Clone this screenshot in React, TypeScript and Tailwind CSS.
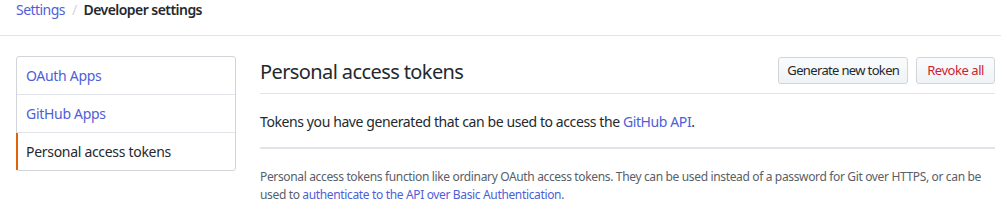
import React from 'react';

const App: React.FC = () => {
    return (
        <div className="w-[1001px] h-[204px] bg-white text-[#24292e] overflow-hidden font-['Noto_Sans',sans-serif]">
            <div className="h-[36px] border-b border-[#e1e4e8] pl-4 flex items-start">
                <div className="text-[14px] leading-[20px] tracking-[-0.55px]">
                    <a className="text-[#4f5ed8]">Settings</a>
                    <span className="text-[#d1d5da] mx-[7px]">/</span>
                    <span className="font-semibold">Developer settings</span>
                </div>
            </div>

            <div className="flex items-start pl-4 pr-[6px] pt-[20px] gap-6">
                <nav className="w-[220px] shrink-0 border border-[#d1d5da] rounded-[3px] text-[14px] tracking-[-0.3px]">
                    <a className="block h-[38px] leading-[37px] pl-[9px] border-b border-[#e1e4e8] text-[#4f5ed8]">OAuth Apps</a>
                    <a className="block h-[38px] leading-[37px] pl-[9px] border-b border-[#e1e4e8] text-[#4f5ed8]">GitHub Apps</a>
                    <a className="block h-[37px] leading-[37px] pl-[8px] border-l-2 border-[#e36209] -ml-px text-[#24292e]">Personal access tokens</a>
                </nav>

                <main className="flex-1">
                    <div className="flex items-start justify-between border-b border-[#e1e4e8] h-[38px]">
                        <h2 className="text-[20px] leading-[32px] font-normal tracking-[-0.6px]">Personal access tokens</h2>
                        <div className="flex gap-2 pt-px">
                            <button className="h-[27px] px-[8px] text-[13px] tracking-[-0.65px] rounded-[3px] border border-[#d1d5da] bg-gradient-to-b from-[#fafbfc] to-[#eff3f6] text-[#24292e]">Generate new token</button>
                            <button className="h-[27px] px-[10px] text-[13px] tracking-[-0.45px] rounded-[3px] border border-[#d1d5da] bg-gradient-to-b from-[#fafbfc] to-[#eff3f6] text-[#cb2431]">Revoke all</button>
                        </div>
                    </div>
                    <p className="text-[14px] leading-[20px] mt-[18px] tracking-[-0.4px]">
                        Tokens you have generated that can be used to access the <a className="text-[#4f5ed8]">GitHub API</a>.
                    </p>
                    <div className="h-[2px] bg-[#e1e4e8] mt-[15px]" />
                    <p className="text-[12px] leading-[18px] mt-[19px] text-[#586069] tracking-[-0.35px]">
                        Personal access tokens function like ordinary OAuth access tokens. They can be used instead of a password for Git over HTTPS, or can be used to <a className="text-[#4f5ed8]">authenticate to the API over Basic Authentication</a>.
                    </p>
                </main>
            </div>
        </div>
    );
};

export default App;
